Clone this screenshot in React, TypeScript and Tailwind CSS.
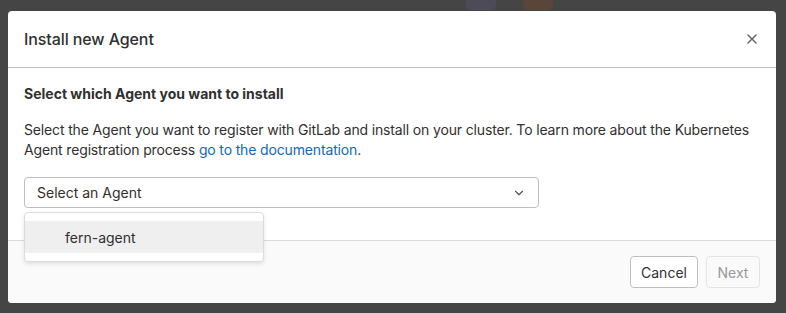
import { ChevronDown, X } from "lucide-react"

export default function App() {
  return (
    <div
      className="relative h-[313px] w-[786px] overflow-hidden bg-[#454545] px-2 pt-[11px] text-[#303030]"
      style={{ fontFamily: "Inter, 'Liberation Sans', sans-serif" }}
    >
      {/* bits of the page behind the backdrop */}
      <div className="absolute left-[466px] top-[-6px] h-[16px] w-[30px] rounded-[5px] bg-[#4c4b57]" />
      <div className="absolute left-[523px] top-[-6px] h-[16px] w-[30px] rounded-[5px] bg-[#5a4638]" />

      <div className="relative flex h-[292px] w-[768px] flex-col rounded-[4px] bg-white">
        <div className="flex h-[57px] items-center justify-between border-b border-[#bfbfbf] px-4">
          <h2 className="text-[16px] font-medium tracking-[-0.1px]">Install new Agent</h2>
          <button className="text-[#666]">
            <X size={16} strokeWidth={2.2} />
          </button>
        </div>

        <div className="flex-1 px-4 pt-4">
          <h3 className="text-[14px] font-bold leading-5">Select which Agent you want to install</h3>
          <p className="mt-4 text-[14px] leading-5 tracking-[-0.15px]">
            Select the Agent you want to register with GitLab and install on your cluster. To learn more about the
            Kubernetes Agent registration process{" "}
            <a className="text-[#1068bf]">go to the documentation</a>.
          </p>
          <div className="mt-[17px] flex h-[31px] w-[515px] items-center justify-between rounded-[4px] border border-[#bfbfbf] px-3 text-[14px]">
            <span>Select an Agent</span>
            <ChevronDown size={14} strokeWidth={2} className="text-[#555]" />
          </div>
        </div>

        <div className="flex h-[63px] items-center justify-end gap-2 rounded-b-[4px] border-t border-[#dbdbdb] bg-[#fafafa] px-4">
          <button className="h-8 w-[68px] rounded-[4px] border border-[#bfbfbf] bg-white text-[14px]">Cancel</button>
          <button className="h-8 w-[54px] rounded-[4px] border border-[#e5e5e5] bg-[#fafafa] text-[14px] text-[#999]">
            Next
          </button>
        </div>

        <div className="absolute left-4 top-[201px] w-[240px] rounded-[4px] border border-[#dbdbdb] bg-white py-2 shadow-[0_2px_4px_rgba(0,0,0,0.1)]">
          <div className="flex h-8 items-center bg-[#efefef] pl-10 text-[14px]">fern-agent</div>
        </div>
      </div>
    </div>
  )
}
